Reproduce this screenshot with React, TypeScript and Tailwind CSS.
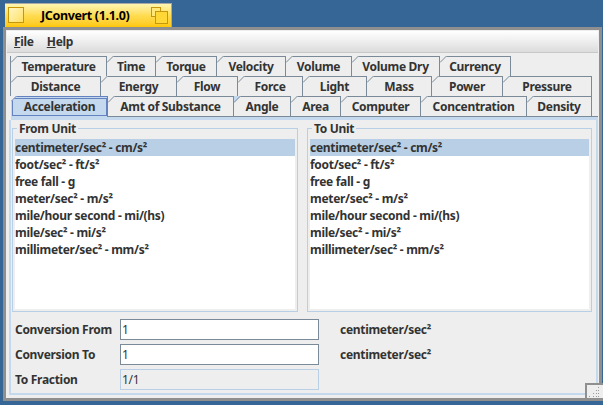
import React from "react";

const rows: [string, number][][] = [
  [["Temperature", 97], ["Time", 49], ["Torque", 61], ["Velocity", 69], ["Volume", 66], ["Volume Dry", 88], ["Currency", 71]],
  [["Distance", 91], ["Energy", 76], ["Flow", 61], ["Force", 65], ["Light", 64], ["Mass", 65], ["Power", 71], ["Pressure", 89]],
  [["Acceleration", 98], ["Amt of Substance", 126], ["Angle", 57], ["Area", 50], ["Computer", 80], ["Concentration", 106], ["Density", 65]],
];

function Tab({ label, width, first, hot }: { label: string; width: number; first?: boolean; hot?: boolean }) {
  return (
    <div
      style={{ width }}
      className={
        "relative h-[20px] shrink-0 flex items-center justify-center border-t border-r border-[#7a8a99] bg-[#eeeeee] text-[#333333] " +
        (first ? "border-l" : "")
      }
    >
      <svg width="7" height="7" viewBox="0 0 7 7" className="absolute left-0 -top-px">
        <path d="M0 0H7L0 7Z" fill={hot ? "#c4d9ee" : "#eeeeee"} />
        <path d="M0 6.5L6.5 0" stroke="#7a8a99" fill="none" />
      </svg>
      {label}
    </div>
  );
}

function SelectedTab({ label, width }: { label: string; width: number }) {
  return (
    <div style={{ width }} className="relative h-[21px] shrink-0 bg-[#c4d9ee] border-t border-r border-[#6382bf] pl-[1px]">
      <svg width="6" height="6" viewBox="0 0 6 6" className="absolute left-0 -top-px">
        <path d="M0 0H6L0 6Z" fill="#eeeeee" />
        <path d="M0 5.5L5.5 0" stroke="#6382bf" fill="none" />
      </svg>
      <div className="h-[18px] mt-[1px] border border-[#6382bf] flex items-center justify-center text-[#333333]">{label}</div>
    </div>
  );
}

const units = [
  "centimeter/sec² - cm/s²",
  "foot/sec² - ft/s²",
  "free fall - g",
  "meter/sec² - m/s²",
  "mile/hour second - mi/(hs)",
  "mile/sec² - mi/s²",
  "millimeter/sec² - mm/s²",
];

function UnitBox({ title, width }: { title: string; width: string }) {
  return (
    <div className={"relative h-[184px] border border-[#b8cfe5] pl-[2px] pr-[2px] pt-[10px] pb-[2px] " + width}>
      <div className="absolute left-[4px] -top-[7px] bg-[#eeeeee] px-[2px] leading-[14px] text-[#333333]">{title}</div>
      <div className="h-full bg-white">
        {units.map((u, i) => (
          <div key={u} className={"h-[17px] leading-[17px] text-[#333333] whitespace-nowrap " + (i === 0 ? "bg-[#b8cfe5]" : "")}>
            {u}
          </div>
        ))}
      </div>
    </div>
  );
}

function Field({ label, value, unit, disabled }: { label: string; value: string; unit?: string; disabled?: boolean }) {
  return (
    <div className="flex items-center h-[21px]">
      <div className="w-[105px] pt-[1px] text-[#333333]">{label}</div>
      <div
        className={
          "w-[199px] h-[21px] flex items-center pl-[1px] pt-[1px] font-normal text-[#333333] border " +
          (disabled ? "bg-[#eeeeee] border-[#b8cfe5]" : "bg-white border-[#7a8a99]")
        }
      >
        {value}
      </div>
      {unit && <div className="ml-[21px] pt-[1px] text-[#333333]">{unit}</div>}
    </div>
  );
}

export default function App() {
  return (
    <div className="relative w-[603px] h-[405px] overflow-hidden bg-[#366696] flex flex-col pt-[3px] text-[12px] font-bold tracking-[-0.3px] [font-family:'Noto_Sans',sans-serif]">
      <div className="relative w-[167px] h-[24px] shrink-0 ml-[5px] bg-gradient-to-b from-[#fff6b0] via-[#ffdc50] to-[#ffc800] border-t border-r border-[#a8a8a8]">
        <div className="absolute left-[3px] top-[3px] w-[16px] h-[16px] border border-[#c8960a] bg-gradient-to-br from-[#fff6c0] to-[#ffe060]" />
        <div className="absolute left-[36px] top-0 h-[24px] flex items-center text-[12.5px] tracking-[-0.35px] text-black whitespace-nowrap">JConvert (1.1.0)</div>
        <svg width="17" height="17" viewBox="0 0 17 17" className="absolute left-[146px] top-[3px]">
          <rect x="0.5" y="0.5" width="9" height="9" fill="#ffe878" stroke="#c8960a" />
          <rect x="4.5" y="4.5" width="12" height="12" fill="#ffd838" stroke="#c8960a" />
        </svg>
      </div>
      <div className="ml-[3px] w-[599px] h-[374px] shrink-0 flex flex-col border-[3px] border-[#8f8f8f] bg-[#eeeeee] p-[1px]">
        <div className="h-[22px] shrink-0 flex items-center gap-[13px] pl-[7px] bg-gradient-to-b from-white to-[#dcdcdc] border-b border-[#c8c8c8] text-[#333333]">
          <span><u>F</u>ile</span>
          <span><u>H</u>elp</span>
        </div>
        <div className="flex flex-col flex-1 pl-[2px] pt-[3px] pb-[2px]">
          <div className="relative flex flex-col pl-[1px]">
            <div className="flex h-[20px]">
              {rows[0].map(([l, w], j) => <Tab key={l} label={l} width={w} first={j === 0} />)}
            </div>
            <div className="flex h-[20px]">
              {rows[1].map(([l, w], j) => <Tab key={l} label={l} width={w} first={j === 0} />)}
            </div>
            <div className="flex h-[20px] pl-[1px]">
              {rows[2].map(([l, w], j) =>
                j === 0 ? <SelectedTab key={l} label={l} width={w - 1} /> : <Tab key={l} label={l} width={w} hot={l === "Angle"} />
              )}
            </div>
          </div>
          <div className="h-[4px] shrink-0 bg-[#c4d9ee] border-t border-[#7a8a99] ml-[2px] w-[587px]" />
          <div className="flex-1 w-[589px] border-x-2 border-b-2 border-[#c4d9ee] pl-[1px] pt-[8px]">
            <div className="flex gap-[9px]">
              <UnitBox title="From Unit" width="w-[286px]" />
              <UnitBox title="To Unit" width="w-[285px]" />
            </div>
            <div className="mt-[7px] pl-[3px] flex flex-col gap-[4px]">
              <Field label="Conversion From" value="1" unit="centimeter/sec²" />
              <Field label="Conversion To" value="1" unit="centimeter/sec²" />
              <Field label="To Fraction" value="1/1" disabled />
            </div>
          </div>
        </div>
      </div>
      <svg width="18" height="18" viewBox="0 0 18 18" className="absolute left-[585px] top-[383px]">
        <path d="M1 18V1H18V18Z" fill="#eeeeee" />
        <path d="M1 15V1H18" fill="none" stroke="#8f8f8f" strokeWidth="2" />
        <path d="M0 16.5H18" fill="none" stroke="#8f8f8f" strokeWidth="3" />
        <g fill="#9a9a9a">
          <rect x="13" y="4" width="1" height="1" /><rect x="11" y="7" width="1" height="1" /><rect x="13" y="7" width="1" height="1" />
          <rect x="8" y="10" width="1" height="1" /><rect x="11" y="10" width="1" height="1" /><rect x="13" y="10" width="1" height="1" />
          <rect x="4" y="13" width="1" height="1" /><rect x="8" y="13" width="1" height="1" /><rect x="11" y="13" width="1" height="1" /><rect x="13" y="13" width="1" height="1" />
        </g>
      </svg>
    </div>
  );
}
